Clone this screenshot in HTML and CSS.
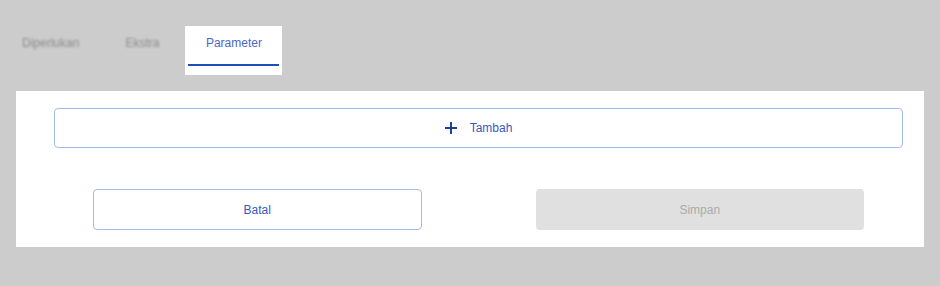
FILE: index.html
```html
<!DOCTYPE html>
<html lang="id">
<head>
    <meta charset="UTF-8">
    <title>Parameter</title>
    <link rel="stylesheet" href="styles.css">
</head>
<body>
    <div class="tabs">
        <div class="tab blurred">Diperlukan</div>
        <div class="tab blurred">Ekstra</div>
        <div class="tab active"><span>Parameter</span></div>
    </div>

    <div class="panel">
        <button class="add-button">
            <svg width="12" height="12" viewBox="0 0 12 12">
                <path d="M6 0v12M0 6h12" stroke="#1d3f9c" stroke-width="2"/>
            </svg>
            Tambah
        </button>

        <div class="form-actions">
            <button class="btn-outline">Batal</button>
            <button class="btn-disabled" disabled>Simpan</button>
        </div>
    </div>
</body>
</html>
```

FILE: styles.css
```css
body {
    margin: 0;
    background-color: #cccccc;
    font-family: "Liberation Sans", Arial, sans-serif;
    font-size: 12px;
}
.tabs {
    display: flex;
    align-items: flex-start;
    gap: 6px;
    padding: 26px 0 0 2px;
}
.tab {
    padding: 10px 20px 0;
    line-height: 14px;
    color: #8c8c8c;
}
.tab.blurred {
    filter: blur(1px);
}
.tab.active {
    background-color: #ffffff;
    padding: 10px 3px 9px;
    color: #4a67c4;
}
.tab.active span {
    display: block;
    padding: 0 17.5px 14px;
    border-bottom: 2px solid #1c4fb8;
}
.panel {
    background-color: #ffffff;
    margin: 16px 16px 0;
    padding: 17px 21px 17px 38px;
}
button {
    font-family: inherit;
    font-size: 12px;
}
.add-button {
    display: flex;
    align-items: center;
    justify-content: center;
    gap: 13px;
    width: 100%;
    height: 40px;
    background-color: #ffffff;
    border: 1px solid #a3bbe8;
    border-radius: 4px;
    color: #3559bd;
    padding: 0;
}
.form-actions {
    display: grid;
    grid-template-columns: 1fr 1fr;
    gap: 114px;
    margin-top: 41px;
    padding: 0 39px;
}
.btn-outline, .btn-disabled {
    height: 41px;
    border-radius: 4px;
}
.btn-outline {
    background-color: #ffffff;
    border: 1px solid #a3bbe8;
    color: #3559bd;
}
.btn-disabled {
    background-color: #e0e0e0;
    border: none;
    color: #ababab;
}
```
